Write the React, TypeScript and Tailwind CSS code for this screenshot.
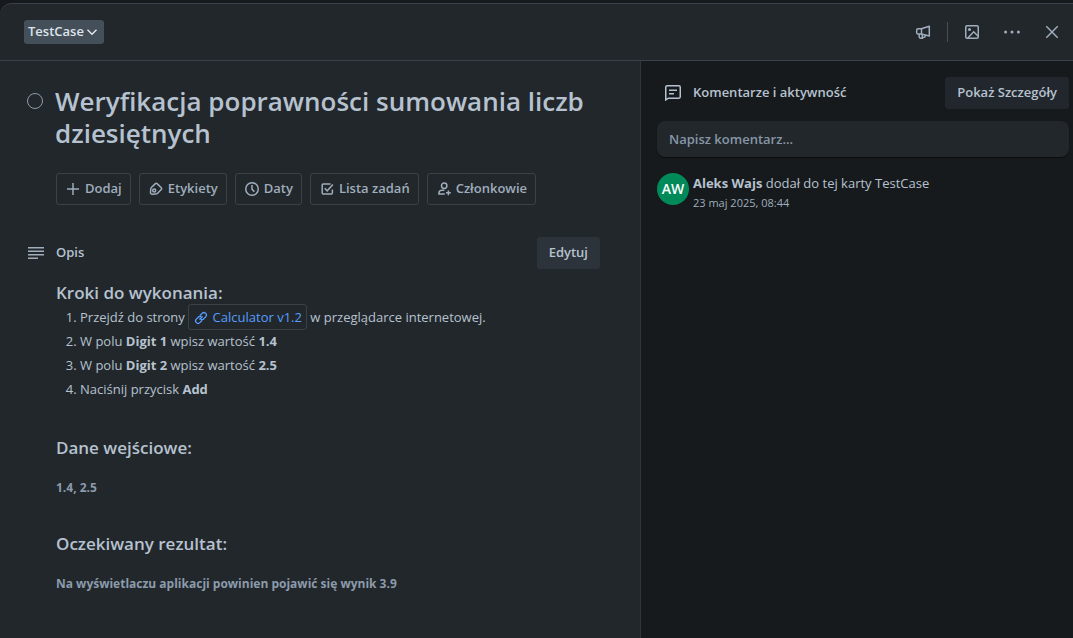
import type { ReactNode } from "react";

type IconProps = { className?: string; children: ReactNode };

function Icon({ className = "size-4", children }: IconProps) {
  return (
    <svg
      viewBox="0 0 16 16"
      className={`shrink-0 ${className}`}
      fill="none"
      stroke="currentColor"
      strokeWidth="1.5"
      aria-hidden="true"
    >
      {children}
    </svg>
  );
}

const icons = {
  chevron: <path d="m3.5 5.8 4.5 4.4 4.5-4.4" />,
  megaphone: (
    <>
      <path d="M6.3 4.75H3a1.3 1.3 0 0 0-1.3 1.3v2.6A1.3 1.3 0 0 0 3 9.95h3.3L14.3 12V2.2z" strokeLinejoin="round" />
      <path d="M6.5 4.8v5.1M4.2 10v2.8a1.4 1.4 0 0 0 1.4 1.4h1.7V10M10.2 11v.8a1.6 1.6 0 0 1-1.6 1.6H7.3" />
    </>
  ),
  image: (
    <>
      <rect x="1.75" y="1.75" width="12.5" height="12.5" rx="1.3" />
      <circle cx="5.5" cy="5.5" r="1.5" fill="currentColor" stroke="none" />
      <path d="m3.8 14 5.9-6.2 4.5 4.4" />
    </>
  ),
  close: <path d="m2.3 2.3 11.4 11.4m0-11.4L2.3 13.7" />,
  add: <path d="M8 2v12M2 8h12" />,
  tag: (
    <>
      <path d="M7.4 2.6a1.2 1.2 0 0 1 1.7 0l4.2 4.2a1.2 1.2 0 0 1 0 1.7l-3.7 3.7a3 3 0 0 1-2 .9l-3.3.2a1.7 1.7 0 0 1-1.8-1.8l.2-3.2a3 3 0 0 1 .9-2z" strokeLinejoin="round" />
      <circle cx="6.2" cy="9.5" r="1.5" />
    </>
  ),
  clock: (
    <>
      <circle cx="8" cy="8" r="6.25" />
      <path d="M8 4v4.2l2.4 2.4" />
    </>
  ),
  checklist: (
    <>
      <path d="M11.6 2.9H4.2a1 1 0 0 0-1 1v8.2a1 1 0 0 0 1 1h8.2a1 1 0 0 0 1-1V8.4" />
      <path d="m5.7 7.2 2.5 2.6 5.7-6.3" />
    </>
  ),
  member: (
    <>
      <circle cx="8.2" cy="4.8" r="2.7" />
      <path d="M8.8 13.1H2.9v-.8a3.1 3.1 0 0 1 3.1-3.1h2.4M12.4 9.4v4.8M10 11.8h4.8" />
    </>
  ),
  link: (
    <>
      <path d="m6.2 9.8 3.6-3.6" />
      <path d="m6.9 5.1 2.4-2.4a2.8 2.8 0 0 1 4 4l-2.4 2.4a2.8 2.8 0 0 1-3.4.5" />
      <path d="m9.1 10.9-2.4 2.4a2.8 2.8 0 0 1-4-4l2.4-2.4a2.8 2.8 0 0 1 3.4-.5" />
    </>
  ),
};

const actions = [
  { label: "Dodaj", icon: icons.add },
  { label: "Etykiety", icon: icons.tag },
  { label: "Daty", icon: icons.clock },
  { label: "Lista zadań", icon: icons.checklist },
  { label: "Członkowie", icon: icons.member },
];

function CardHeader() {
  return (
    <header className="flex h-[57px] items-center justify-between border-b border-[#39424a] pl-6 pr-[13px]">
      <button className="flex h-6 items-center rounded-[3px] bg-[#454f59] px-1 text-[13px] font-semibold text-[#dee4ea]">
        TestCase
        <Icon>{icons.chevron}</Icon>
      </button>
      <div className="flex items-center text-[#9fadbc]">
        <button aria-label="Obserwuj" className="mr-4 block">
          <Icon>{icons.megaphone}</Icon>
        </button>
        <span className="mr-4 h-5 w-px bg-[#454f59]" />
        <button aria-label="Okładka" className="mr-6 block">
          <Icon>{icons.image}</Icon>
        </button>
        <button aria-label="Więcej" className="mr-6 block">
          <svg viewBox="0 0 16 16" className="size-4" fill="currentColor" aria-hidden="true">
            <circle cx="1.6" cy="8" r="1.5" />
            <circle cx="8" cy="8" r="1.5" />
            <circle cx="14.4" cy="8" r="1.5" />
          </svg>
        </button>
        <button aria-label="Zamknij" className="block">
          <Icon>{icons.close}</Icon>
        </button>
      </div>
    </header>
  );
}

function Description() {
  return (
    <section>
      <div className="flex items-center pl-7">
        <svg viewBox="0 0 16 12" className="mr-3 h-3 w-4 shrink-0" fill="#9fadbc" aria-hidden="true">
          <path d="M0 0h16v1.6H0zM0 3.4h16V5H0zM0 7h16v1.6H0zM0 10.4h10V12H0z" />
        </svg>
        <h2 className="flex-1 text-[13px] font-semibold">Opis</h2>
        <button className="h-8 rounded-[3px] bg-[#2c333a] px-3 text-[13px] font-semibold">Edytuj</button>
      </div>
      <div className="pl-14 pt-3 text-[13px] leading-6">
        <h3 className="text-[17px] font-semibold leading-6">Kroki do wykonania:</h3>
        <ol className="list-decimal pl-6">
          <li>
            Przejdź do strony{" "}
            <a href="#calculator" className="rounded-[3px] border border-[#3a4249] px-1 py-[3px] text-[#579dff]">
              <Icon className="mx-px mb-0.5 inline-block size-3.5">{icons.link}</Icon> Calculator v1.2
            </a>{" "}
            w przeglądarce internetowej.
          </li>
          <li>
            W polu <strong>Digit 1</strong> wpisz wartość <strong>1.4</strong>
          </li>
          <li>
            W polu <strong>Digit 2</strong> wpisz wartość <strong>2.5</strong>
          </li>
          <li>
            Naciśnij przycisk <strong>Add</strong>
          </li>
        </ol>
        <h3 className="mt-[35px] text-[17px] font-semibold leading-6">Dane wejściowe:</h3>
        <p className="mt-4 text-xs font-bold leading-6 text-[#8c9bab]">1.4, 2.5</p>
        <h3 className="mt-8 text-[17px] font-semibold leading-6">Oczekiwany rezultat:</h3>
        <p className="mt-4 text-xs font-bold leading-6 text-[#8c9bab]">
          Na wyświetlaczu aplikacji powinien pojawić się wynik 3.9
        </p>
      </div>
    </section>
  );
}

function Activity() {
  return (
    <aside className="border-l border-[#2f363c] bg-[#161a1d] py-4 pl-4 pr-1">
      <div className="flex items-center pl-2">
        <Icon className="mr-3 size-4">
          <path d="M.75 14.9V2.2A1.4 1.4 0 0 1 2.15.8h11.7a1.4 1.4 0 0 1 1.4 1.4v9.6a1.4 1.4 0 0 1-1.4 1.4H3.5zM4 5.3h8M4 8.7h5" />
        </Icon>
        <h2 className="flex-1 text-[13px] font-semibold">Komentarze i aktywność</h2>
        <button className="h-8 rounded-[3px] bg-[#22262d] px-3 text-[13px] font-semibold">Pokaż Szczegóły</button>
      </div>
      <input
        aria-label="Napisz komentarz"
        placeholder="Napisz komentarz..."
        className="mt-3 block h-9 w-full rounded-lg bg-[#22272b] px-3 text-[13px] font-semibold shadow-[0_1px_1px_#0a0c0d] outline-none placeholder:text-[#8696a7]"
      />
      <div className="mt-4 flex gap-1">
        <span className="flex size-8 shrink-0 items-center justify-center rounded-full bg-[#008a5a] text-sm font-semibold text-white">
          AW
        </span>
        <div>
          <p className="text-[13px] leading-5">
            <strong>Aleks Wajs</strong> dodał do tej karty TestCase
          </p>
          <p className="text-[11px] leading-5 text-[#9fadbc]">23 maj 2025, 08:44</p>
        </div>
      </div>
    </aside>
  );
}

export default function App() {
  return (
    <div className="flex min-h-screen flex-col bg-[#161a1d] pt-[3px] font-['Open_Sans','Noto_Sans',sans-serif] text-[#b6c2cf]">
      <div className="flex flex-1 flex-col overflow-hidden rounded-tl-xl border-t border-[#39424a] bg-[#22272b]">
        <CardHeader />
        <div className="grid flex-1 grid-cols-[minmax(0,1fr)_433px]">
          <main className="pb-7 pr-10 pt-6">
            <div className="flex items-start pl-[27px]">
              <input
                type="checkbox"
                aria-label="Oznacz jako ukończone"
                className="mr-3 mt-2 size-4 shrink-0 appearance-none rounded-full border border-[#8c9bab]"
              />
              <h1 className="text-[26px] font-semibold leading-8">
                Weryfikacja poprawności sumowania liczb dziesiętnych
              </h1>
            </div>
            <div className="mb-8 mt-6 flex flex-wrap gap-2 pl-14">
              {actions.map(({ label, icon }) => (
                <button
                  key={label}
                  className="flex h-8 items-center gap-1 rounded-[3px] border border-[#3a4249] px-2 text-[13px] font-semibold text-[#9fadbc]"
                >
                  <Icon>{icon}</Icon>
                  {label}
                </button>
              ))}
            </div>
            <Description />
          </main>
          <Activity />
        </div>
      </div>
    </div>
  );
}
